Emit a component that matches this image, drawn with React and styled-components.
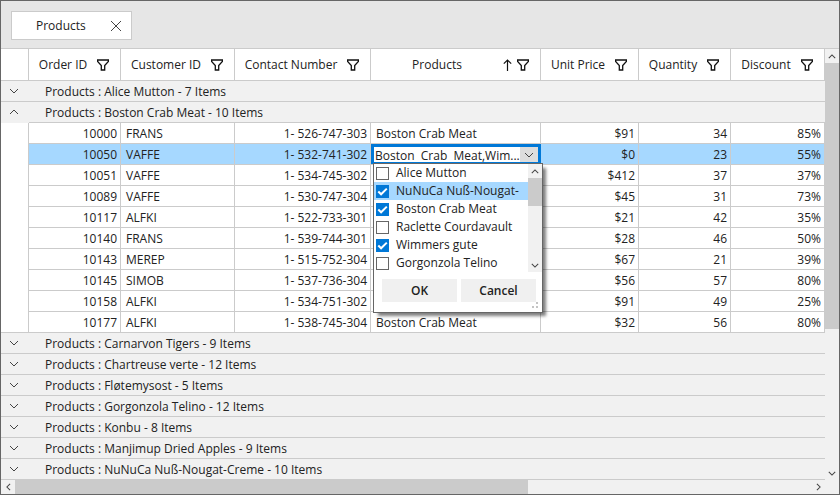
import React, { useState } from "react";
import styled, { createGlobalStyle, css } from "styled-components";

const line = "#cbcbcb";
const panel = "#f1f1f1";
const accent = "#0078d7";
const selection = "#a6d8ff";

const GlobalStyle = createGlobalStyle`
  *, *::before, *::after { box-sizing: border-box; }
  body { margin: 0; }
  body, button, input { font: 12px/20px "Open Sans", "Segoe UI", sans-serif; color: #222; }
  button { border: 0; padding: 0; background: none; cursor: pointer; }
`;

const Window = styled.main`
  display: flex;
  flex-direction: column;
  min-height: 100vh;
  border: 1px solid #666;
  background: ${panel};
`;

const GroupArea = styled.header`
  display: flex;
  padding: 10px;
  height: 48px;
  background: #e6e6e6;
  border-bottom: 1px solid ${line};
`;

const GroupChip = styled.div`
  display: flex;
  align-items: center;
  justify-content: space-between;
  width: 121px;
  height: 29px;
  padding: 0 9px 0 24px;
  background: #fff;
  border: 1px solid ${line};
`;

const IconButton = styled.button`
  display: flex;
  align-items: center;
  justify-content: center;
`;

const GridArea = styled.div`
  display: grid;
  grid-template-columns: minmax(0, 1fr) 14px;
  grid-template-rows: 1fr 14px;
  flex: 1;
`;

const Table = styled.table`
  width: 100%;
  table-layout: fixed;
  border-collapse: separate;
  border-spacing: 0;
`;

const Column = styled.col`
  width: ${(p) => (p.$width ? `${p.$width}px` : "auto")};
`;

const HeaderCell = styled.th`
  height: 32px;
  padding: 0;
  font-weight: 400;
  background: #fff;
  border-right: 1px solid ${line};
  border-bottom: 1px solid ${line};
`;

const HeaderContent = styled.div`
  display: flex;
  align-items: center;
  padding-right: 11px;
`;

const HeaderLabel = styled.span`
  flex: 1;
  text-align: center;
  white-space: nowrap;
`;

const HeaderIcons = styled.span`
  display: flex;
  align-items: center;
  gap: 4px;
`;

const cellBase = css`
  height: 21px;
  padding: 2px 3px 0 5px;
  line-height: 18px;
  white-space: nowrap;
  border-bottom: 1px solid ${line};
`;

const Cell = styled.td`
  ${cellBase}
  position: relative;
  text-align: ${(p) => (p.$right ? "right" : "left")};
  background: ${(p) => (p.$selected ? selection : "#fff")};
  border-right: 1px solid ${line};
`;

const IndentCell = styled.td`
  background: #fff;
  border-right: 1px solid ${line};
  border-bottom: ${(p) => (p.$last ? `1px solid ${line}` : 0)};
`;

const ExpanderCell = styled.td`
  ${cellBase}
  padding: 0;
  background: ${panel};
  border-bottom-color: ${(p) => (p.$open ? panel : line)};
`;

const Expander = styled(IconButton)`
  width: 26px;
  height: 20px;
`;

const CaptionCell = styled.td`
  ${cellBase}
  padding-left: 16px;
  background: ${panel};
`;

const Editor = styled.div`
  position: absolute;
  inset: 0 -1px 0 0;
  z-index: 1;
  display: flex;
  border: 3px solid ${accent};
  border-bottom-width: 2px;
  background: #fff;
`;

const EditorInput = styled.input`
  flex: 1;
  min-width: 0;
  height: 15px;
  padding: 1px 0 0 1px;
  border: 0;
  outline: 0;
  line-height: 14px;
`;

const DropButton = styled(IconButton)`
  width: 18px;
  background: #ddd;
`;

const Popup = styled.div`
  position: absolute;
  top: 19px;
  left: 2px;
  z-index: 2;
  width: 170px;
  text-align: left;
  background: #fff;
  border: 1px solid #666;
  box-shadow: 4px 4px 3px -1px rgba(0, 0, 0, 0.5);
`;

const OptionArea = styled.div`
  display: grid;
  grid-template-columns: 1fr 14px;
`;

const Option = styled.label`
  display: flex;
  align-items: center;
  gap: 7px;
  height: 18px;
  padding-left: 2px;
  line-height: 18px;
  background: ${(p) => (p.$active ? selection : "#fff")};
`;

const CheckWrap = styled.span`
  display: grid;
  width: 13px;
  height: 13px;
  > * { grid-area: 1 / 1; }
  svg { pointer-events: none; }
`;

const Check = styled.input`
  appearance: none;
  width: 13px;
  height: 13px;
  margin: 0;
  border: 1px solid #666;
  background: #fff;
  &:checked { background: ${accent}; border-color: ${accent}; }
`;

const Actions = styled.div`
  display: flex;
  gap: 4px;
  padding: 7px 5px 0 8px;
`;

const ActionButton = styled.button`
  width: 75px;
  height: 23px;
  font-weight: 600;
  background: #f0f0f0;
`;

const GripRow = styled.div`
  display: flex;
  justify-content: flex-end;
  height: 10px;
  padding-right: 3px;
`;

const Scrollbar = styled.div`
  display: flex;
  flex-direction: ${(p) => (p.$horizontal ? "row" : "column")};
  background: ${panel};
`;

const ScrollButton = styled(IconButton)`
  flex: none;
  width: 14px;
  height: 14px;
`;

const Thumb = styled.div`
  background: ${line};
  ${(p) => (p.$horizontal ? "height" : "width")}: 14px;
  flex: none;
  flex-basis: ${(p) => p.$size};
`;

const Track = styled.div`
  flex: 1;
  display: flex;
  flex-direction: ${(p) => (p.$horizontal ? "row" : "column")};
`;

const chevrons = {
  down: "M1 1L5 5L9 1",
  up: "M1 5L5 1L9 5",
  left: "M5 1L1 5L5 9",
  right: "M1 1L5 5L1 9",
};

function Chevron({ dir, size = 8 }) {
  const vertical = dir === "up" || dir === "down";
  const short = Math.round(size * 0.6);
  return (
    <svg
      width={vertical ? size : short}
      height={vertical ? short : size}
      viewBox={vertical ? "0 0 10 6" : "0 0 6 10"}
      fill="none"
      stroke="#444"
      strokeWidth={size < 10 ? 1.3 : 1}
      aria-hidden="true"
    >
      <path d={chevrons[dir]} />
    </svg>
  );
}

const FilterIcon = () => (
  <svg width="12" height="12" viewBox="0 0 12 12" fill="none" stroke="#111" strokeWidth="1.3" aria-hidden="true">
    <path d="M.6 1H11.4V2.5L7.7 6.6V11H4.3V6.6L.6 2.5Z" />
  </svg>
);

const SortIcon = () => (
  <svg width="10" height="12" viewBox="0 0 10 12" fill="none" stroke="#111" strokeWidth="1.2" aria-hidden="true">
    <path d="M4.5 12V1M.8 4.7L4.5 1L8.2 4.7" />
  </svg>
);

const CloseIcon = () => (
  <svg width="12" height="12" viewBox="0 0 12 12" stroke="#444" strokeWidth="1" aria-hidden="true">
    <path d="M1 1L11 11M11 1L1 11" />
  </svg>
);

const TickIcon = () => (
  <svg width="13" height="13" viewBox="0 0 13 13" fill="none" stroke="#fff" strokeWidth="2" aria-hidden="true">
    <path d="M2.3 6.5L5.1 9.3L10.8 3.6" />
  </svg>
);

const Grip = () => (
  <svg width="7" height="7" viewBox="0 0 7 7" fill="#c4c4c4" aria-hidden="true">
    <path d="M4 0h2v2h-2zM4 4h2v2h-2zM0 4h2v2h-2z" />
  </svg>
);

function ScrollBar({ horizontal, thumb, arrow = 8 }) {
  return (
    <Scrollbar $horizontal={horizontal}>
      <ScrollButton aria-label={horizontal ? "Scroll left" : "Scroll up"}>
        <Chevron dir={horizontal ? "left" : "up"} size={arrow} />
      </ScrollButton>
      <Track $horizontal={horizontal}>
        <Thumb $horizontal={horizontal} $size={thumb} />
      </Track>
      <ScrollButton aria-label={horizontal ? "Scroll right" : "Scroll down"}>
        <Chevron dir={horizontal ? "right" : "down"} size={arrow} />
      </ScrollButton>
    </Scrollbar>
  );
}

const columns = [
  { label: "Order ID", width: 92 },
  { label: "Customer ID", width: 114 },
  { label: "Contact Number", width: 136 },
  { label: "Products", width: 170, sorted: true },
  { label: "Unit Price", width: 98 },
  { label: "Quantity", width: 92 },
  { label: "Discount" },
];

const orders = [
  ["10000", "FRANS", "1- 526-747-303", "$91", "34", "85%"],
  ["10050", "VAFFE", "1- 532-741-302", "$0", "23", "55%"],
  ["10051", "VAFFE", "1- 534-745-302", "$412", "37", "37%"],
  ["10089", "VAFFE", "1- 530-747-304", "$45", "31", "73%"],
  ["10117", "ALFKI", "1- 522-733-301", "$21", "42", "35%"],
  ["10140", "FRANS", "1- 539-744-301", "$28", "46", "50%"],
  ["10143", "MEREP", "1- 515-752-304", "$67", "21", "39%"],
  ["10145", "SIMOB", "1- 537-736-304", "$56", "57", "80%"],
  ["10158", "ALFKI", "1- 534-751-302", "$91", "49", "25%"],
  ["10177", "ALFKI", "1- 538-745-304", "$32", "56", "80%"],
];

const groups = [
  { name: "Alice Mutton", count: 7 },
  { name: "Boston Crab Meat", count: 10, rows: orders },
  { name: "Carnarvon Tigers", count: 9 },
  { name: "Chartreuse verte", count: 12 },
  { name: "Fløtemysost", count: 5 },
  { name: "Gorgonzola Telino", count: 12 },
  { name: "Konbu", count: 8 },
  { name: "Manjimup Dried Apples", count: 9 },
  { name: "NuNuCa Nuß-Nougat-Creme", count: 10 },
];

const options = [
  "Alice Mutton",
  "NuNuCa Nuß-Nougat-",
  "Boston Crab Meat",
  "Raclette Courdavault",
  "Wimmers gute",
  "Gorgonzola Telino",
];

function ProductEditor() {
  const [checked, setChecked] = useState([options[1], options[2], options[4]]);
  const toggle = (name) =>
    setChecked((list) => (list.includes(name) ? list.filter((n) => n !== name) : [...list, name]));
  return (
    <>
      <Editor>
        <EditorInput aria-label="Products" readOnly value="Boston  Crab  Meat,Wim..." />
        <DropButton aria-label="Toggle product list">
          <Chevron dir="down" size={10} />
        </DropButton>
      </Editor>
      <Popup>
        <OptionArea>
          <div>
            {options.map((name, i) => (
              <Option key={name} $active={i === 1}>
                <CheckWrap>
                  <Check type="checkbox" checked={checked.includes(name)} onChange={() => toggle(name)} />
                  {checked.includes(name) && <TickIcon />}
                </CheckWrap>
                {name}
              </Option>
            ))}
          </div>
          <ScrollBar thumb="28px" />
        </OptionArea>
        <Actions>
          <ActionButton>OK</ActionButton>
          <ActionButton>Cancel</ActionButton>
        </Actions>
        <GripRow>
          <Grip />
        </GripRow>
      </Popup>
    </>
  );
}

function OrderRow({ order, selected, last }) {
  const [id, customer, contact, price, quantity, discount] = order;
  return (
    <tr>
      <IndentCell $last={last} />
      <Cell $right $selected={selected}>{id}</Cell>
      <Cell $selected={selected}>{customer}</Cell>
      <Cell $right $selected={selected}>{contact}</Cell>
      <Cell $selected={selected}>{selected ? <ProductEditor /> : "Boston Crab Meat"}</Cell>
      <Cell $right $selected={selected}>{price}</Cell>
      <Cell $right $selected={selected}>{quantity}</Cell>
      <Cell $right $selected={selected}>{discount}</Cell>
    </tr>
  );
}

export default function App() {
  return (
    <>
      <GlobalStyle />
      <Window>
        <GroupArea>
          <GroupChip>
            Products
            <IconButton aria-label="Remove Products grouping">
              <CloseIcon />
            </IconButton>
          </GroupChip>
        </GroupArea>
        <GridArea>
          <div>
            <Table>
              <colgroup>
                <Column $width={28} />
                {columns.map((c) => (
                  <Column key={c.label} $width={c.width} />
                ))}
              </colgroup>
              <thead>
                <tr>
                  <HeaderCell />
                  {columns.map((c) => (
                    <HeaderCell key={c.label} scope="col">
                      <HeaderContent>
                        <HeaderLabel>{c.label}</HeaderLabel>
                        <HeaderIcons>
                          {c.sorted && <SortIcon />}
                          <IconButton aria-label={`Filter ${c.label}`}>
                            <FilterIcon />
                          </IconButton>
                        </HeaderIcons>
                      </HeaderContent>
                    </HeaderCell>
                  ))}
                </tr>
              </thead>
              <tbody>
                {groups.map((g) => (
                  <React.Fragment key={g.name}>
                    <tr>
                      <ExpanderCell $open={!!g.rows}>
                        <Expander aria-label={`Toggle ${g.name}`}>
                          <Chevron dir={g.rows ? "up" : "down"} size={10} />
                        </Expander>
                      </ExpanderCell>
                      <CaptionCell colSpan={7}>
                        {`Products : ${g.name} - ${g.count} Items`}
                      </CaptionCell>
                    </tr>
                    {g.rows?.map((o, i) => (
                      <OrderRow key={o[0]} order={o} selected={i === 1} last={i === g.rows.length - 1} />
                    ))}
                  </React.Fragment>
                ))}
              </tbody>
            </Table>
          </div>
          <ScrollBar thumb="66%" />
          <ScrollBar horizontal thumb="64.5%" />
        </GridArea>
      </Window>
    </>
  );
}
